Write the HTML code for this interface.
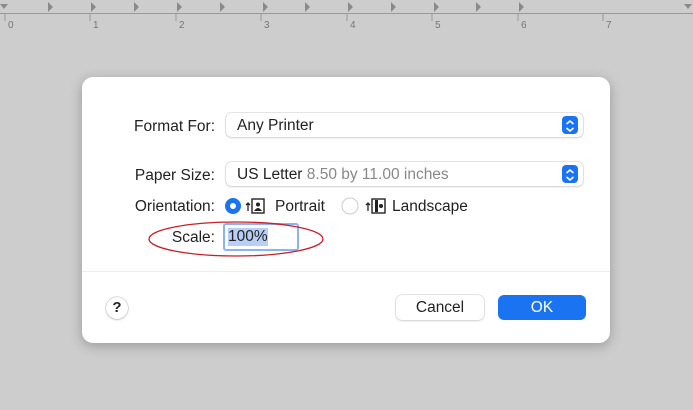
<!DOCTYPE html>
<html><head><style>
body{margin:0;width:693px;height:410px;background:#cdcdcd;position:relative;overflow:hidden;font-family:"Liberation Sans",sans-serif;}
.abs{position:absolute}
.dlg{left:82px;top:77px;width:528px;height:266px;background:#fff;border-radius:11px;box-shadow:0 3px 12px rgba(0,0,0,.25)}
.lbl{font-size:15.5px;color:#222;text-align:right;width:140px;left:75px}
.pop{left:226px;width:357px;height:24px;border-radius:5px;background:#fff;box-shadow:0 0 0 .5px #ccc,0 1px 2px rgba(0,0,0,.15);font-size:15.5px;color:#222;line-height:26px;text-indent:11px}
.arr{position:absolute;right:5px;top:3px;width:16px;height:18px;background:#1a73f0;border-radius:4px}
.btn{height:25px;border-radius:6px;font-size:15.5px;text-align:center;line-height:25px}
</style></head><body>
<svg class="abs" style="left:0;top:0" width="693" height="32">
<rect width="693" height="32" fill="#cdcdcd"/>
<line x1="0" y1="13.5" x2="693" y2="13.5" stroke="#999"/>
<g stroke="#999">
<line x1="5" y1="13" x2="5" y2="21"/>
<line x1="90" y1="13" x2="90" y2="21"/>
<line x1="176" y1="13" x2="176" y2="21"/>
<line x1="261" y1="13" x2="261" y2="21"/>
<line x1="347" y1="13" x2="347" y2="21"/>
<line x1="432" y1="13" x2="432" y2="21"/>
<line x1="518" y1="13" x2="518" y2="21"/>
<line x1="603" y1="13" x2="603" y2="21"/>
</g>
<g fill="#8a8a8a">
<path d="M48 2l5 5-5 5z"/><path d="M91 2l5 5-5 5z"/><path d="M134 2l5 5-5 5z"/><path d="M177 2l5 5-5 5z"/><path d="M220 2l5 5-5 5z"/><path d="M263 2l5 5-5 5z"/><path d="M305 2l5 5-5 5z"/><path d="M348 2l5 5-5 5z"/><path d="M391 2l5 5-5 5z"/><path d="M434 2l5 5-5 5z"/><path d="M476 2l5 5-5 5z"/><path d="M519 2l5 5-5 5z"/>
<path d="M0 4h8l-4 5z"/><path d="M684 4h8l-4 5z"/>
</g>
<g font-size="10" fill="#777">
<text x="8" y="28">0</text><text x="93" y="28">1</text><text x="179" y="28">2</text><text x="264" y="28">3</text><text x="350" y="28">4</text><text x="435" y="28">5</text><text x="521" y="28">6</text><text x="606" y="28">7</text>
</g>
</svg>
<div class="abs dlg"></div>
<div class="abs lbl" style="top:118px">Format For:</div>
<div class="abs pop" style="top:113px">Any Printer<div class="arr"></div></div>
<div class="abs lbl" style="top:167px">Paper Size:</div>
<div class="abs pop" style="top:162px">US Letter <span style="color:#888">8.50 by 11.00 inches</span><div class="arr"></div></div>
<svg class="abs" style="left:560px;top:116px" width="20" height="70">
<path d="M6.5 8l3.5-3 3.5 3M6.5 12l3.5 3 3.5-3" stroke="#fff" stroke-width="1.6" fill="none"/>
<path d="M6.5 57l3.5-3 3.5 3M6.5 61l3.5 3 3.5-3" stroke="#fff" stroke-width="1.6" fill="none"/>
</svg>
<div class="abs lbl" style="top:198px">Orientation:</div>
<svg class="abs" style="left:224px;top:196px" width="260" height="22">
<circle cx="9" cy="10" r="8" fill="#1a73f0"/><circle cx="9" cy="10" r="3" fill="#fff"/>
<path d="M24 15V7M22 9l2-2 2 2" stroke="#222" stroke-width="1.3" fill="none"/>
<rect x="28" y="3" width="12" height="14" fill="none" stroke="#222" stroke-width="1.4"/>
<circle cx="34" cy="8.5" r="2" fill="#222"/><path d="M30 15q4-6 8 0z" fill="#222"/>
<circle cx="126" cy="10" r="8" fill="#fff" stroke="#ccc"/>
<path d="M144 15V7M142 9l2-2 2 2" stroke="#222" stroke-width="1.3" fill="none"/>
<rect x="148" y="3" width="13" height="14" fill="none" stroke="#222" stroke-width="1.4"/>
<rect x="151" y="4" width="3" height="12" fill="#222"/><circle cx="157" cy="10" r="2" fill="#222"/>
</svg>
<div class="abs" style="left:275px;top:198px;font-size:15.5px;color:#222">Portrait</div>
<div class="abs" style="left:392px;top:198px;font-size:15.5px;color:#222">Landscape</div>
<div class="abs lbl" style="top:229px">Scale:</div>
<div class="abs" style="left:223px;top:223px;width:72px;height:24px;border:2px solid #8bb2f3;border-radius:3px;background:#fff"></div>
<div class="abs" style="left:228px;top:228px;height:18px;background:#b8cff5;font-size:15.5px;color:#222;line-height:18px">100%</div>
<svg class="abs" style="left:140px;top:218px" width="200" height="42"><ellipse cx="96" cy="21" rx="87" ry="17" fill="none" stroke="#c8202a" stroke-width="1.3"/></svg>
<div class="abs" style="left:82px;top:271px;width:528px;height:1px;background:#eee"></div>
<div class="abs" style="left:106px;top:297px;width:22px;height:22px;border-radius:50%;background:#fff;box-shadow:0 0 0 .5px #bbb,0 1px 2px rgba(0,0,0,.2);text-align:center;line-height:22px;font-size:15px;font-weight:bold;color:#222">?</div>
<div class="abs btn" style="left:396px;top:295px;width:88px;background:#fff;box-shadow:0 0 0 .5px #ccc,0 1px 2px rgba(0,0,0,.15);color:#222">Cancel</div>
<div class="abs btn" style="left:498px;top:295px;width:88px;background:#1a73f0;color:#fff">OK</div>
</body></html>
